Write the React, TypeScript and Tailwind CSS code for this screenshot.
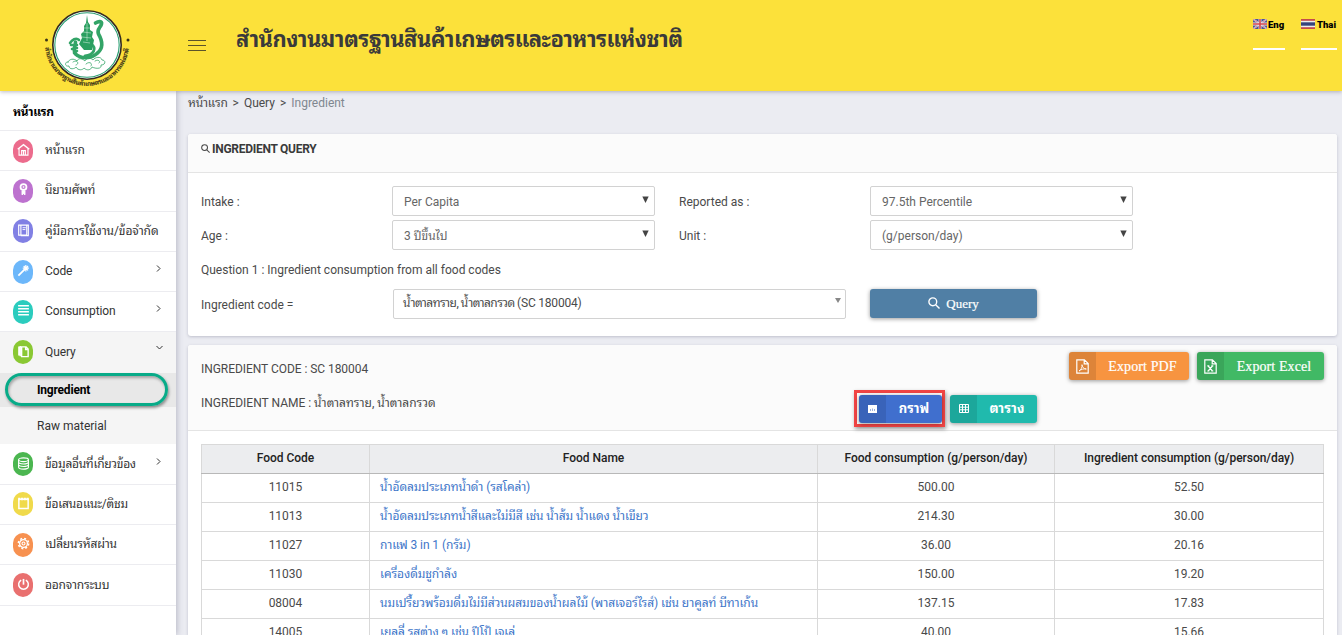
import React from "react";

type IconName = "home" | "award" | "book" | "wand" | "menu" | "files" | "database" | "note" | "gear" | "power";

const shapes: Record<IconName, React.ReactNode> = {
  home: (
    <>
      <path d="M.8 6.700 7 1.800l6.200 4.900" strokeWidth="1.6" />
      <path d="M2.200 6v7h9.600V6M5 13V8.200h4V13M7 9v4" strokeWidth="1.2" />
    </>
  ),
  award: (
    <>
      <circle cx="7" cy="4.3" r="3.2" strokeWidth="1.9" />
      <path d="M5.400 8.300v4.500l1.600-1.300 1.600 1.300V8.300z" fill="currentColor" strokeWidth="1" />
      <circle cx="7" cy="4.300" r=".7" />
    </>
  ),
  book: (
    <>
      <path d="M1.800 1.200h8.700v10.800H1.800zM4.200 1.500V12M10.500 1.200h1.700v11.300H4" strokeWidth="1.2" />
      <path d="M6 4h3.500M6 6h3" />
    </>
  ),
  wand: (
    <>
      <path d="M1.500 12.500 8 6" strokeWidth="1.9" />
      <path d="M9.500 1v7M6.200 4.500h6.600M7.200 2.200l4.700 4.700M11.900 2.200 7.200 6.900" strokeWidth="1.3" />
    </>
  ),
  menu: <path d="M1.200 2h11.600M1.200 5.200h11.600M1.200 8.400h11.600M1.200 11.600h11.600" strokeWidth="1.600" />,
  files: (
    <>
      <path d="M2 1.500v9.800M3.500 1v11" strokeWidth="1.5" />
      <path d="M5 2h4.800L12 4.300v8.200H5zM9.300 2v2.800H12" strokeWidth="1.5" />
    </>
  ),
  database: (
    <>
      <ellipse cx="7" cy="3" rx="5.3" ry="2" strokeWidth="1.2" />
      <path d="M1.700 3v8c0 2.700 10.600 2.700 10.600 0V3M1.700 5.500c0 2.700 10.600 2.700 10.600 0M1.700 8.200c0 2.700 10.600 2.700 10.600 0" strokeWidth="1.2" />
    </>
  ),
  note: (
    <>
      <path d="M2 2.500h10v9.800H2z" strokeWidth="1.6" />
      <path d="M1.300 2.200h11.400" strokeWidth="2.6" strokeDasharray="2.300 .7" />
    </>
  ),
  gear: (
    <>
      <circle cx="7" cy="7" r="4.2" strokeWidth="1.4" />
      <circle cx="7" cy="7" r="1.6" strokeWidth="1.2" />
      <circle cx="7" cy="7" r="5.500" strokeWidth="1.700" strokeDasharray="2.160 2.160" />
    </>
  ),
  power: (
    <>
      <path d="M4.500 2.300a5.200 5.200 0 1 0 5 0" strokeWidth="1.600" />
      <path d="M7 1v6.200" strokeWidth="1.800" />
    </>
  ),
};

function Badge({ name, color }: { name: IconName; color: string }) {
  return (
    <span className={`flex h-6 w-5 shrink-0 items-center justify-center rounded-[10px] text-white ${color}`}>
      <svg width="13" height="13" viewBox="0 0 14 14" fill="none" stroke="currentColor" strokeWidth="1" className="-mt-0.5">
        {shapes[name]}
      </svg>
    </span>
  );
}

function Chevron({ down }: { down?: boolean }) {
  return (
    <svg width="7" height="7" viewBox="0 0 7 7" fill="none" stroke="#333" strokeWidth="1" className={`ml-auto ${down ? "mb-2.5 mr-[13px]" : "mb-1.5 mr-[14px]"}`}>
      <path d={down ? "M.5 2l3 3 3-3" : "M2 .5l3 3-3 3"} />
    </svg>
  );
}

interface ItemProps {
  icon: IconName;
  color: string;
  label: string;
  tracking?: string;
  arrow?: "right" | "down";
}

function SideItem({ icon, color, label, tracking = "tracking-[-0.1px]", arrow }: ItemProps) {
  return (
    <div className={`flex h-[40.3px] items-center border-b pl-[13px] ${arrow === "down" ? "border-[#f5f5f5] bg-[#f5f5f5]" : "border-[#ececf0]"}`}>
      <Badge name={icon} color={color} />
      <span className={`mb-px ml-3 whitespace-nowrap text-[12px] text-[#333] ${tracking}`}>{label}</span>
      {arrow && <Chevron down={arrow === "down"} />}
    </div>
  );
}

function Logo() {
  return (
    <svg width="96" height="88" viewBox="0 0 96 88" className="ml-[39px] mt-1 shrink-0">
      <circle cx="48" cy="41" r="34.2" fill="#fff" stroke="#332c20" strokeWidth="1.6" />
      <circle cx="48" cy="41" r="32.2" fill="none" stroke="#279d70" strokeWidth="1.1" />
      <g fill="none" stroke="#33a467" strokeLinecap="round" strokeLinejoin="round">
        <path d="M56.500 19c3-2 7-2 6 1-1 4-5 5-3 10 4 7 5 14-1 19-6 6-17 6-22 1-3-4 0-8 0-12" strokeWidth="3.600" />
        <path d="M46 52c9-1 12-8 6-12-4-2-6 1-4 3" strokeWidth="2.800" />
        <path d="M40 36c-3-3-7 0-9 3M32 41l6 0M33 45l5-1M35 49l3-2" strokeWidth="2.600" />
        <path d="M29 58c-3-1-4 5 1 4 0 4 6 3 7 1 2 4 7 3 8 1 3 3 7 2 8-1 4 2 10 2 9-2 5 0 5-5 1-5-1-4-7-3-9 0-3-3-7-2-8 1-3-3-7-3-8 0-3-3-8-2-9 1zM34 58c4-3 7 2 3 3M47 60c3-3 7-1 5 2M56 57c3-2 6 0 4 2" strokeWidth=".8" />
      </g>
      <path d="M48 11l1 7 2 3v5l3 2-1 5 2 3-2 10h-8l-5-6 3-6-1-4 3-3v-5l2-3z" fill="#2a9f60" />
      <path d="M48 19v18M45 24h6M44 28l8 1M43 33l9 1M44 38l7 1" stroke="#c5e8d2" strokeWidth=".6" />
      <defs>
        <path id="ring" d="M6 40a42 42 0 0 0 84 0" />
      </defs>
      <text fontSize="6.500" fontWeight="700" fill="#3c3416" fontFamily="'Noto Sans Thai Looped', Garuda, Loma, 'Noto Sans Thai', sans-serif">
        <textPath href="#ring" textLength="124" lengthAdjust="spacing" startOffset="3">
          สำนักงานมาตรฐานสินค้าเกษตรและอาหารแห่งชาติ
        </textPath>
      </text>
      <circle cx="7.500" cy="36" r="1.500" fill="#3c3416" />
      <circle cx="89" cy="36" r="1.500" fill="#3c3416" />
    </svg>
  );
}

function Flag({ thai }: { thai?: boolean }) {
  return (
    <svg width="14" height="10" viewBox="0 0 14 10" className="shrink-0">
      {thai ? (
        <>
          <path fill="#c44b4b" d="M0 0h14v10H0z" />
          <path fill="#eee" d="M0 1.800h14v6.400H0z" />
          <path fill="#35437c" d="M0 3.300h14v3.400H0z" />
        </>
      ) : (
        <>
          <path fill="#4d5790" d="M0 0h14v10H0z" />
          <path stroke="#dcd6e4" strokeWidth="1.600" d="M0 0l14 10M14 0L0 10" />
          <path stroke="#d06070" strokeWidth=".6" d="M0 0l14 10M14 0L0 10" />
          <path stroke="#eee" strokeWidth="2.800" d="M7 0v10M0 5h14" />
          <path stroke="#d2444f" strokeWidth="1.600" d="M7 0v10M0 5h14" />
        </>
      )}
    </svg>
  );
}

function Search({ size, className = "" }: { size: number; className?: string }) {
  return (
    <svg width={size} height={size} viewBox="0 0 12 12" fill="none" stroke="currentColor" strokeWidth="1.400" className={className}>
      <circle cx="4.800" cy="4.800" r="3.900" />
      <path d="M7.700 7.700l3.800 3.800" />
    </svg>
  );
}

function SelectBox({ value }: { value: string }) {
  return (
    <div className="flex h-[29.500px] w-[263px] items-center justify-between rounded-[2px] border border-[#d2d2d2] bg-white pl-[11px] pr-[5px] text-[#666]">
      <span className="whitespace-nowrap pt-0.5">{value}</span>
      <svg width="7" height="7" viewBox="0 0 7 7" className="mb-0.5">
        <path d="M.3.500h6.400L3.500 7z" fill="#444" />
      </svg>
    </div>
  );
}

function FileIcon({ kind }: { kind: "pdf" | "excel" }) {
  return (
    <svg width="13" height="15" viewBox="0 0 13 15" fill="none" stroke="#fff" strokeWidth="1.200">
      <path d="M.8.800h7.600l3.800 3.800v9.600H.8zM8.200.8v4h4" />
      {kind === "pdf" ? (
        <path d="M3 12c2-1 3.500-4 3-6.300 0 2 2 4.500 4.300 4.300C8 9.500 5 10.300 3 12" strokeWidth=".9" />
      ) : (
        <path d="M4.200 7l4.200 5M8.400 7l-4.200 5M3.300 6.900h2M7.300 6.900h2M3.300 12h2M7.300 12h2" strokeWidth="1.200" />
      )}
    </svg>
  );
}

interface ActionProps {
  color: string;
  size: string;
  label: string;
  labelClass: string;
  icon: React.ReactNode;
}

function ActionButton({ color, size, label, labelClass, icon }: ActionProps) {
  return (
    <button className={`flex h-7 overflow-hidden rounded-[3px] text-white shadow-[0_1px_4px_rgba(0,0,0,0.4)] ${color} ${size}`}>
      <span className="flex h-full w-[27px] shrink-0 items-center justify-center bg-black/10">{icon}</span>
      <span className={`flex h-full flex-1 items-center justify-center whitespace-nowrap ${labelClass}`}>{label}</span>
    </button>
  );
}

const rows = [
  ["11015", "น้ำอัดลมประเภทน้ำดำ (รสโคล่า)", "500.00", "52.50"],
  ["11013", "น้ำอัดลมประเภทน้ำสีและไม่มีสี เช่น น้ำส้ม น้ำแดง น้ำเขียว", "214.30", "30.00"],
  ["11027", "กาแฟ 3 in 1 (กรัม)", "36.00", "20.16"],
  ["11030", "เครื่องดื่มชูกำลัง", "150.00", "19.20"],
  ["08004", "นมเปรี้ยวพร้อมดื่มไม่มีส่วนผสมของน้ำผลไม้ (พาสเจอร์ไรส์) เช่น ยาคูลท์ บีทาเก้น", "137.15", "17.83"],
  ["14005", "เยลลี่ รสต่าง ๆ เช่น ปีโป้ เจเล่", "40.00", "15.66"],
];

export default function App() {
  return (
    <div className="flex h-[635px] w-[1342px] flex-col overflow-hidden bg-[#ebecf2] font-[Roboto,'Noto_Sans_Thai_Looped',Garuda,Loma,Waree,'Noto_Sans_Thai',sans-serif] text-[12px] text-[#4a4a4a]">
      <header className="relative z-20 flex h-[91px] shrink-0 bg-[#fce13a] shadow-[0_1px_4px_rgba(60,60,90,0.35)]">
        <Logo />
        <div className="ml-[53px] mt-10 flex h-[11px] w-[18px] shrink-0 flex-col justify-between">
          <i className="h-px bg-[#5c542a]" />
          <i className="h-px bg-[#5c542a]" />
          <i className="h-px bg-[#5c542a]" />
        </div>
        <h1 className="ml-[30px] mt-[24px] whitespace-nowrap text-[22px] font-bold leading-8 tracking-[-0.53px] text-[#3a3a3a]">
          สำนักงานมาตรฐานสินค้าเกษตรและอาหารแห่งชาติ
        </h1>
        <nav className="ml-auto mr-[5px] mt-[19px] flex h-[31px] gap-4 font-[Roboto] text-[9.500px] font-black leading-[11px] text-black">
          <div className="flex w-8 gap-px border-b-2 border-white"><Flag />Eng</div>
          <div className="flex w-9 gap-[2px] border-b-2 border-white"><Flag thai />Thai</div>
        </nav>
      </header>

      <div className="flex min-h-0 flex-1">
        <aside className="relative z-10 w-44 shrink-0 bg-white shadow-[1px_0_6px_rgba(60,60,90,0.3)]">
          <div className="flex h-10 items-center border-b border-[#ececf0] pl-[13px] pt-0.5 text-[12px] font-bold tracking-[-0.400px] text-black">หน้าแรก</div>
          <SideItem icon="home" color="bg-[#ec6c8d]" label="หน้าแรก" tracking="tracking-[-0.2px]" />
          <SideItem icon="award" color="bg-[#bd72cf]" label="นิยามศัพท์" tracking="tracking-[-0.2px]" />
          <SideItem icon="book" color="bg-[#8180e4]" label="คู่มือการใช้งาน/ข้อจำกัด" />
          <SideItem icon="wand" color="bg-[#6cb7fa]" label="Code" arrow="right" />
          <SideItem icon="menu" color="bg-[#2bccbe]" label="Consumption" arrow="right" />
          <SideItem icon="files" color="bg-[#8ac833]" label="Query" arrow="down" />
          <div className="relative flex h-[34px] items-center bg-[#e8e8e8] pl-[37px] font-bold tracking-[-0.2px] text-black">
            Ingredient
            <span className="absolute left-[5px] top-0 h-[33px] w-[163px] rounded-full border-[3px] border-[#08ab88] shadow-[1px_2px_3px_rgba(0,0,0,0.4),inset_1px_2px_3px_rgba(0,0,0,0.3)]" />
          </div>
          <div className="flex h-[37.700px] items-center bg-[#f5f5f5] pl-[37px] text-[#333]">Raw material</div>
          <SideItem icon="database" color="bg-[#4bb650]" label="ข้อมูลอื่นที่เกี่ยวข้อง" tracking="tracking-[-0.3px]" arrow="right" />
          <SideItem icon="note" color="bg-[#f0da4b]" label="ข้อเสนอแนะ/ติชม" tracking="tracking-[-0.2px]" />
          <SideItem icon="gear" color="bg-[#f79150]" label="เปลี่ยนรหัสผ่าน" tracking="tracking-[-0.2px]" />
          <SideItem icon="power" color="bg-[#e9706f]" label="ออกจากระบบ" tracking="tracking-[-0.2px]" />
        </aside>

        <main className="flex min-w-0 flex-1 flex-col pl-3 pr-[5px]">
          <div className="flex h-[43px] shrink-0 gap-[5px] pt-1 leading-4">
            <span className="tracking-[-0.2px]">หน้าแรก</span><span>&gt;</span><span>Query</span><span>&gt;</span><span className="text-[#7f8790]">Ingredient</span>
          </div>

          <section className="h-[202px] shrink-0 rounded-[3px] bg-white shadow-[0_1px_3px_rgba(60,60,90,0.25)]">
            <div className="flex h-[39px] items-start gap-[2px] rounded-t-[3px] border-b border-[#e4e4e4] bg-[#fbfbfb] pl-[13px] pt-[7px] leading-4">
              <Search size={9} className="mt-[3px]" />
              <b className="font-bold tracking-[-0.27px] text-[#3a3a3a]">INGREDIENT QUERY</b>
            </div>
            <div className="grid grid-cols-[191px_287px_191px_263px] gap-y-[4.500px] pl-[13px] pt-[13px]">
              <span className="pt-2 leading-4">Intake :</span>
              <SelectBox value="Per Capita" />
              <span className="pt-2 leading-4">Reported as :</span>
              <SelectBox value="97.5th Percentile" />
              <span className="pt-2 leading-4">Age :</span>
              <SelectBox value="3 ปีขึ้นไป" />
              <span className="pt-2 leading-4">Unit :</span>
              <SelectBox value="(g/person/day)" />
            </div>
            <p className="pl-[13px] pt-3 leading-4">Question 1 : Ingredient consumption from all food codes</p>
            <div className="flex pl-[13px] pt-[11.500px]">
              <span className="w-48 pt-2 leading-4">Ingredient code =</span>
              <div className="flex h-[30px] w-[453px] items-start justify-between rounded-[2px] border border-[#d2d2d2] pl-[9px] pr-[4px] pt-[5px] leading-4">
                <span className="tracking-[-0.55px]">น้ำตาลทราย, น้ำตาลกรวด <span className="tracking-[-0.2px]">(SC 180004)</span></span>
                <svg width="6" height="5" viewBox="0 0 6 5" className="mt-[3px]"><path d="M0 0h6L3 5z" fill="#888" /></svg>
              </div>
              <button className="ml-6 flex h-[29px] w-[167px] items-center justify-center gap-1.5 rounded-[3px] bg-[#507fa5] font-['Liberation_Serif'] text-[13px] text-white shadow-[0_1px_4px_rgba(0,0,0,0.4)] [-webkit-text-stroke:0.2px_white]">
                <Search size={12} className="-mt-0.5" />Query
              </button>
            </div>
          </section>

          <section className="mt-[9px] min-h-0 flex-1 rounded-t-[3px] bg-white shadow-[0_1px_3px_rgba(60,60,90,0.25)]">
            <div className="flex h-[86px] justify-between rounded-t-[3px] border-b border-[#e4e4e4] bg-[#fbfbfb] pl-[13px] pr-[13px]">
              <div className="flex flex-col gap-[18px] pt-4 leading-4">
                <span className="tracking-[-0.05px]">INGREDIENT CODE : SC 180004</span>
                <span>INGREDIENT NAME : น้ำตาลทราย, น้ำตาลกรวด</span>
              </div>
              <div className="flex w-[470px] flex-col pt-[7px]">
                <div className="flex justify-end gap-2">
                  <ActionButton color="bg-[#f79440]" size="w-[120px]" label="Export PDF" labelClass="font-['Liberation_Serif'] text-[14px] tracking-[0.1px] [-webkit-text-stroke:0.2px_white]" icon={<FileIcon kind="pdf" />} />
                  <ActionButton color="bg-[#41b965]" size="w-[127px]" label="Export Excel" labelClass="font-['Liberation_Serif'] text-[14px] tracking-[0.1px] [-webkit-text-stroke:0.2px_white]" icon={<FileIcon kind="excel" />} />
                </div>
                <div className="mt-[10px] flex items-center gap-[5px]">
                  <div className="border-[3px] border-[#f04444] bg-[#fbfbfb] pb-px pl-[2px] pt-[2px] shadow-[1px_2px_4px_rgba(0,0,0,0.4)]">
                    <ActionButton
                      color="bg-[#406fce]"
                      size="w-[83px]"
                      label="กราฟ"
                      labelClass="text-[13px] font-bold"
                      icon={<svg width="9" height="8" viewBox="0 0 9 8"><path fill="#fff" d="M0 0h9v8H0z" /><path stroke="#3a64b9" strokeWidth=".5" d="M2.500 6V4M4.500 6V3.500M6.500 6V4" /></svg>}
                    />
                  </div>
                  <ActionButton
                    color="bg-[#20baad]"
                    size="w-[87px]"
                    label="ตาราง"
                    labelClass="text-[13.500px] font-bold"
                    icon={<svg width="10" height="9" viewBox="0 0 10 9" fill="none" stroke="#fff"><path d="M.500.500h9v8h-9zM.500 3.200h9M.500 5.800h9M3.500.500v8M6.500.500v8" /></svg>}
                  />
                </div>
              </div>
            </div>
            <table className="ml-[13px] mt-[13px] w-[1122px] table-fixed border-collapse">
              <colgroup>
                <col className="w-[168px]" /><col className="w-[448px]" /><col className="w-[237px]" /><col className="w-[269px]" />
              </colgroup>
              <thead>
                <tr className="h-[29px] bg-[#ecedef] text-[#222]">
                  {["Food Code", "Food Name", "Food consumption (g/person/day)", "Ingredient consumption (g/person/day)"].map((t) => (
                    <th key={t} className="border border-[#d9d9d9] border-b-[#b8b8b8] p-0 pb-0.5 text-center font-medium leading-4 tracking-[-0.03px]">{t}</th>
                  ))}
                </tr>
              </thead>
              <tbody>
                {rows.map(([code, name, food, ingredient]) => (
                  <tr key={code} className="h-[29px]">
                    <td className="border border-[#d9d9d9] p-0 pb-0.5 text-center leading-4">{code}</td>
                    <td className="whitespace-nowrap border border-[#d9d9d9] p-0 pb-0.5 pl-[10px] leading-4 tracking-[-0.08px] text-[#4076c9]">{name}</td>
                    <td className="border border-[#d9d9d9] p-0 pb-0.5 text-center leading-4">{food}</td>
                    <td className="border border-[#d9d9d9] p-0 pb-0.5 text-center leading-4">{ingredient}</td>
                  </tr>
                ))}
              </tbody>
            </table>
          </section>
        </main>
      </div>
    </div>
  );
}
